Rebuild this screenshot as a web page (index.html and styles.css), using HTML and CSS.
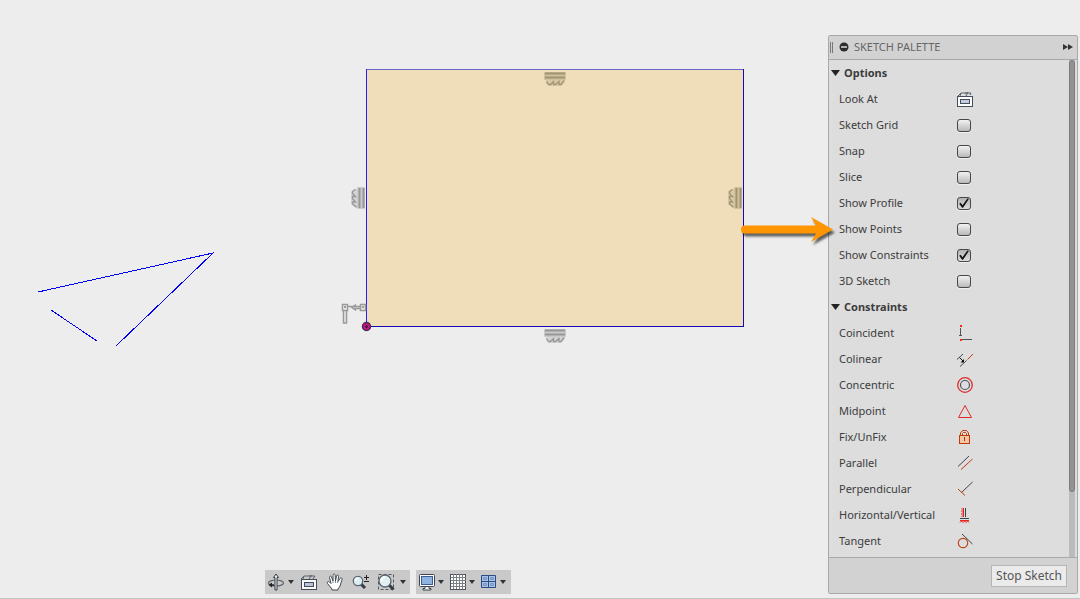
FILE: index.html
```
<!DOCTYPE html>
<html lang="en">
<head>
<meta charset="utf-8">
<title>Sketch</title>
<link rel="stylesheet" href="styles.css">
</head>
<body>
<main class="workspace">
  <svg class="canvas" width="1080" height="598" viewBox="0 0 1080 598" role="img" aria-label="Sketch canvas">
    <defs>
      <g id="rail">
        <rect width="22" height="8" rx="1" fill="currentColor" opacity=".4"/>
        <path d="M2 8h19v2l-4 4H5l-3-3z" fill="currentColor" opacity=".3"/>
        <path d="M1 1.500h20M1 5.500h20" stroke="currentColor" stroke-width="2"/>
        <path d="M2.500 9.500l2 3h2l3-3v3h2l3.500-3v3h2l3-4" fill="none" stroke="currentColor" stroke-width="1.300"/>
      </g>
    </defs>
    <rect x="366" y="69" width="378" height="258" fill="#f0deba"/>
    <path d="M366 69.500h378" stroke="#6b66c4"/>
    <path d="M743.500 69v258M366 326.500h378" stroke="#1408b4"/>
    <path d="M366.500 69v258" stroke="#2020ff"/>
    <path d="M38 292L213 253L116 346M51 310L97 341" fill="none" stroke="#0000f5" shape-rendering="crispEdges"/>
    <g color="#a29473"><use href="#rail" x="544" y="72"/></g>
    <g color="#979797"><use href="#rail" x="544" y="329"/></g>
    <g color="#979797" transform="translate(365 187) rotate(90)"><use href="#rail"/></g>
    <g color="#a29473" transform="translate(742 187) rotate(90)"><use href="#rail"/></g>
    <g stroke="#999" stroke-width="1.500" fill="none">
      <rect x="342.500" y="304.500" width="5" height="6"/><rect x="360.500" y="304.500" width="5" height="6"/>
      <path d="M343.500 311v12h3v-12M348 306.500h12M354 308.500h6M356 304.500l-4 3 4 3"/>
    </g>
    <path d="M344 306h2v2h-2zM362 306h2v2h-2z" fill="#999"/>
    <circle cx="366.500" cy="326.500" r="4" fill="#d0108c" stroke="#44304c" stroke-width="1.500"/>
    <circle cx="366.500" cy="326.500" r="1.500" fill="#402040"/>
  </svg>

  <aside class="palette" aria-label="Sketch palette">
    <header class="palette-head">
      <span class="grip"></span>
      <button class="plain" aria-label="Collapse"><svg width="10" height="10"><circle cx="5" cy="5" r="4.500" fill="#2c2c2c"/><path d="M2 5h6" stroke="#ddd" stroke-width="1.500"/></svg></button>
      <h1 class="palette-title">SKETCH PALETTE</h1>
      <button class="plain" aria-label="Dock"><svg width="10" height="8"><path d="M0 1l5 3-5 3zM5 1l5 3-5 3z" fill="#333"/></svg></button>
    </header>
    <div class="palette-body">
      <div class="rows">
        <button class="section" aria-expanded="true"><svg width="9" height="6"><path d="M0 0h9L4.500 6z" fill="#222"/></svg>Options</button>
        <button class="row"><span>Look At</span>
          <svg width="16" height="16"><path d="M1 5L4 2h10L13 4M4 2L3 5M9 5l2-4M9 1v2" fill="none" stroke="#56606b"/><rect x=".5" y="5.500" width="15" height="10" fill="#fff" stroke="#454e5b"/><rect x="3.500" y="8.500" width="9" height="4" fill="#c3cbdc" stroke="#454e5b"/></svg></button>
        <div class="row"><label for="grid">Sketch Grid</label><input type="checkbox" id="grid"></div>
        <div class="row"><label for="snap">Snap</label><input type="checkbox" id="snap"></div>
        <div class="row"><label for="slice">Slice</label><input type="checkbox" id="slice"></div>
        <div class="row"><label for="profile">Show Profile</label><input type="checkbox" id="profile" checked></div>
        <div class="row"><label for="points">Show Points</label><input type="checkbox" id="points"></div>
        <div class="row"><label for="constraints">Show Constraints</label><input type="checkbox" id="constraints" checked></div>
        <div class="row"><label for="sketch3d">3D Sketch</label><input type="checkbox" id="sketch3d"></div>
        <button class="section" aria-expanded="true"><svg width="9" height="6"><path d="M0 0h9L4.500 6z" fill="#222"/></svg>Constraints</button>
        <button class="row"><span>Coincident</span>
          <svg width="16" height="16"><path d="M3.500 3v8M5 14.500h10M2 10.500h3" stroke="#50545c"/><path d="M3 0h2v2H3zM3 14h2v2H3z" fill="#f22a10"/></svg></button>
        <button class="row"><span>Colinear</span>
          <svg width="16" height="16"><path d="M0 8.500L6 3M3 15.500l6.500-6" stroke="#444b57"/><path d="M10.500 8.500L16 3" stroke="#c63c10"/><path d="M2.500 6.500L6 10" stroke="#111"/><path d="M7 8v3.500H3.500z" fill="#111"/></svg></button>
        <button class="row"><span>Concentric</span>
          <svg width="16" height="16"><circle cx="8" cy="8" r="7.300" fill="none" stroke="#e02a26" stroke-width="1.300"/><circle cx="8" cy="8" r="4.500" fill="none" stroke="#4a5262" stroke-width="1.200"/></svg></button>
        <button class="row"><span>Midpoint</span>
          <svg width="16" height="16"><path d="M8 2.500L14.500 14.500h-13z" fill="none" stroke="#e02a26"/></svg></button>
        <button class="row"><span>Fix/UnFix</span>
          <svg width="16" height="16"><path d="M3.500 7V4l2-2.500h4l2 2.500v3M5.500 7V4.500l1-1h2l1 1V7" fill="none" stroke="#bd3c0a"/><rect x="2.500" y="6.500" width="10" height="8" fill="#f3c7a6" stroke="#bd3c0a"/><path d="M7.500 8v4" stroke="#a83002"/></svg></button>
        <button class="row"><span>Parallel</span>
          <svg width="16" height="16"><path d="M1 11.500L12 1" stroke="#3d4451"/><path d="M4 14.500L15.500 4" stroke="#c03a0c"/></svg></button>
        <button class="row"><span>Perpendicular</span>
          <svg width="16" height="16"><path d="M4.500 11.500L15.500 1" stroke="#3d4451"/><path d="M1 8l7 6.500" stroke="#c03a0c"/></svg></button>
        <button class="row"><span>Horizontal/Vertical</span>
          <svg width="16" height="16"><path d="M6.500 1v9M3 13.500h9" stroke="#e8231c"/><path d="M4.500 1l1.500 1.500L4.500 4 6 5.500 4.500 7 6 8.500 4.500 10M3 15.500L4.500 14 6 15.500 7.500 14 9 15.500 10.500 14 12 15.500" fill="none" stroke="#e8231c"/><path d="M8.500 1v9M3 11.500h9" stroke="#2f4650"/></svg></button>
        <button class="row"><span>Tangent</span>
          <svg width="16" height="16"><circle cx="6" cy="10" r="4.700" fill="none" stroke="#c0491c" stroke-width="1.200"/><path d="M5 1l10.500 10" stroke="#3d4451"/></svg></button>
      </div>
      <div class="scroll-track"><div class="scroll-thumb"></div></div>
    </div>
    <footer class="palette-foot"><button class="stop">Stop Sketch</button></footer>
  </aside>

  <svg class="pointer" width="96" height="34" viewBox="0 0 96 34" aria-hidden="true"><path d="M5 9.500h71L71 1l22 12.500L71 26l5-8.500H5a4 4 0 0 1 0-8z" fill="#ff9500"/></svg>

  <nav class="toolbar" aria-label="View tools">
    <div class="group">
      <button class="drop" aria-label="Orbit"><svg width="18" height="18"><ellipse cx="9" cy="10" rx="7.500" ry="3" fill="none" stroke="#5b646c" stroke-width="1.200"/><path d="M9 1l2.500 3.500H10V17H8V4.500H6.500z" fill="#f4f4f4" stroke="#333b42"/><path d="M1.500 12L5 9.500v5z" fill="#222"/><path d="M4 12h3" stroke="#222" stroke-width="1.500"/></svg><svg width="11" height="5"><path d="M3 0h6L6 4z" fill="#333"/></svg></button>
      <button class="tool" aria-label="Look At"><svg width="18" height="18"><path d="M1 6L4 3h11l-2 3M4 3L3 6M9 6l3-4M10 2v2" fill="none" stroke="#5d666f"/><rect x="1.500" y="6.500" width="15" height="10" fill="#fafafa" stroke="#414b58"/><rect x="4.500" y="9.500" width="9" height="4" fill="#b8c3d8" stroke="#414b58"/></svg></button>
      <button class="tool" aria-label="Pan"><svg width="18" height="18"><path d="M6 16L1.500 10.500C.5 9 2 8 3.500 9L5 10.500 3.500 4.500c0-1.500 1.500-2 2-.5L7 8V2.500c0-2 2-2 2.200 0L9.500 8l1-5c.5-1.700 2-1.200 2 .5L12 8.500l2-3c1-1.300 2.500-.5 2 1L14 13l-2 3v1H6z" fill="#fff" stroke="#444b52"/><path d="M7 8v2M9.500 8v2M12 8l-.5 2" stroke="#888"/></svg></button>
      <button class="tool" aria-label="Zoom"><svg width="18" height="18"><path d="M9 11l4 4" stroke="#343b45" stroke-width="3"/><circle cx="6" cy="8" r="4.700" fill="#dceef2" stroke="#596575" stroke-width="1.300"/><path d="M3.500 8a3 3 0 0 1 3-3" fill="none" stroke="#fff" stroke-width="1.500"/><path d="M12 4.500h5M14.500 2v5M12 8.500h5" stroke="#222"/></svg></button>
      <button class="drop" aria-label="Zoom Window"><svg width="20" height="18"><rect x="2.500" y="1.500" width="15" height="15" fill="none" stroke="#555" stroke-dasharray="3 2"/><path d="M13 12l4.500 4.500" stroke="#343b45" stroke-width="3"/><circle cx="9" cy="8" r="6" fill="#e2f0f2" stroke="#596575" stroke-width="1.300"/><path d="M5.500 8A4 4 0 0 1 9 4" fill="none" stroke="#fff" stroke-width="2"/></svg><svg width="12" height="5"><path d="M4 0h6L7 4z" fill="#333"/></svg></button>
    </div>
    <div class="group">
      <button class="drop" aria-label="Display Settings"><svg width="18" height="18"><rect x="1.500" y="1.500" width="15" height="12" rx="1" fill="#fff" stroke="#3f4650"/><rect x="3.500" y="3.500" width="11" height="8" fill="#8fb4df" stroke="#3c5c96"/><path d="M7 13.500h4v2h2v1.500H5v-1.500h2z" fill="#f4f4f4" stroke="#3f4650"/></svg><svg width="11" height="5"><path d="M2 0h6L5 4z" fill="#333"/></svg></button>
      <button class="drop" aria-label="Grid"><svg width="18" height="18"><rect x="1.500" y="1.500" width="15" height="15" fill="#fff" stroke="#4d5258"/><path d="M4.500 1v15M7.500 1v15M10.500 1v15M13.500 1v15M2 4.500h15M2 7.500h15M2 10.500h15M2 13.500h15" stroke="#7b8087"/></svg><svg width="11" height="5"><path d="M2 0h6L5 4z" fill="#333"/></svg></button>
      <button class="drop" aria-label="Viewports"><svg width="18" height="18"><path d="M1.500 2.500h7v6h-7zM8.500 2.500h7v6h-7zM1.500 8.500h7v6h-7zM8.500 8.500h7v6h-7z" fill="#a9c4e6" stroke="#2e4a82"/><path d="M3.500 4.500h3v2h-3zM10.500 4.500h3v2h-3zM3.500 10.500h3v2h-3zM10.500 10.500h3v2h-3z" fill="#8fb0de" stroke="#7796c6"/></svg><svg width="11" height="5"><path d="M2 0h6L5 4z" fill="#333"/></svg></button>
    </div>
  </nav>
</main>
</body>
</html>
```
FILE: styles.css
```
* { box-sizing: border-box; }
body {
  margin: 0;
  background: #ededed;
  color: #3c3c3c;
  font: 11px/16px "Noto Sans", "Open Sans", sans-serif;
}
button {
  margin: 0;
  padding: 0;
  border: 0;
  background: none;
  color: inherit;
  font: inherit;
  text-align: left;
}
svg { display: block; flex: none; }
.workspace {
  position: relative;
  height: 100vh;
  overflow: hidden;
  border-bottom: 1px solid #c4c4c4;
}
.canvas { position: absolute; top: 0; left: 0; }

.palette {
  position: absolute;
  top: 35px;
  right: 2px;
  bottom: 4px;
  width: 250px;
  display: flex;
  flex-direction: column;
  border: 1px solid #a9a9a9;
  border-radius: 2px;
  background: #dddddd;
}
.palette-head {
  display: flex;
  align-items: center;
  height: 24px;
  padding: 0 4px 1px 1px;
  border-bottom: 1px solid #a9a9a9;
  background: #d2d2d2;
}
.grip {
  width: 3px;
  height: 11px;
  margin-right: 6px;
  border: solid #777;
  border-width: 0 1px;
}
.palette-title {
  flex: 1;
  margin: 0 0 0 5px;
  color: #666;
  font-size: 11px;
  font-weight: 400;
}
.palette-body { display: flex; flex: 1; min-height: 0; }
.rows { flex: 1; overflow: hidden; }
.section, .row { height: 26px; width: 100%; align-items: center; }
.section {
  display: flex;
  gap: 4px;
  padding-left: 2px;
  font-weight: 700;
}
.row {
  display: grid;
  grid-template-columns: 118px 16px;
  padding-left: 10px;
}
input[type="checkbox"] {
  appearance: none;
  width: 14px;
  height: 13px;
  margin: 0;
  border: 1px solid #484848;
  border-radius: 3px;
  background: linear-gradient(#f2f2f2, #b9b9b9);
  box-shadow: 0 1px 0 #f0f0f0;
}
input[type="checkbox"]:checked { background: linear-gradient(#b2b2b2, #dcdcdc); }
input[type="checkbox"]:checked::before {
  content: "";
  display: block;
  width: 12px;
  height: 11px;
  background: #111;
  clip-path: polygon(10% 56%, 22% 48%, 38% 70%, 78% 8%, 90% 14%, 42% 94%, 34% 94%);
}
.scroll-track {
  width: 6px;
  margin-right: 2px;
  background: #b9bbbd;
}
.scroll-thumb {
  height: 87%;
  border: 1px solid #7c7c7c;
  border-radius: 3px;
  background: #929292;
}
.palette-foot {
  display: flex;
  justify-content: flex-end;
  padding: 7px 10px 6px;
  border-top: 1px solid #a9a9a9;
  background: #d2d2d2;
}
.stop {
  height: 22px;
  padding: 0 4px;
  border: 1px solid #b4b4b4;
  background: #ebebeb;
  color: #555;
  font-size: 12px;
}
.pointer {
  position: absolute;
  left: 740px;
  top: 216px;
  filter: drop-shadow(2px 3px 1px rgba(0, 0, 0, 0.6));
}
.toolbar {
  position: absolute;
  left: 265px;
  bottom: 4px;
  display: flex;
  gap: 6px;
}
.group {
  display: flex;
  height: 24px;
  padding-right: 2px;
  background: #c9c9c9;
}
.drop {
  display: flex;
  align-items: center;
  padding-left: 2px;
}
.tool { padding: 0 4px; }
```
